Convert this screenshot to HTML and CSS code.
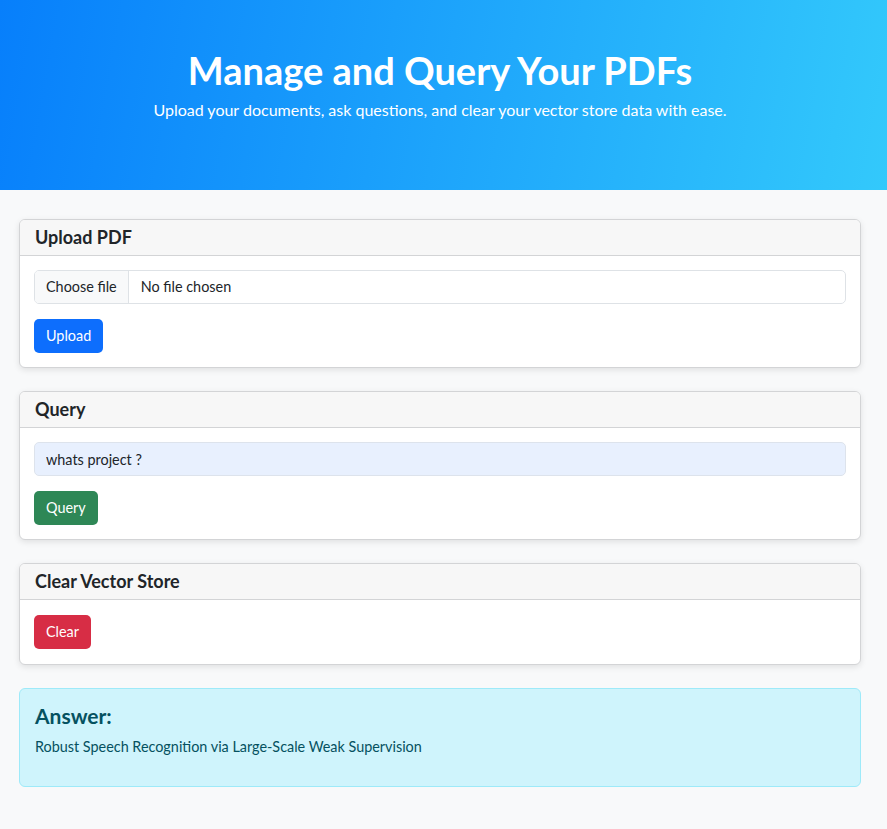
FILE: index.html
```html
<!DOCTYPE html>
<html lang="en">
<head>
<meta charset="utf-8">
<title>Manage and Query Your PDFs</title>
<link rel="stylesheet" href="styles.css">
</head>
<body>
<header class="hero">
  <h1 class="hero-title">Manage and Query Your PDFs</h1>
  <p class="hero-sub">Upload your documents, ask questions, and clear your vector store data with ease.</p>
</header>
<main class="main">
  <section class="card">
    <div class="card-header"><h5 class="card-title">Upload PDF</h5></div>
    <div class="card-body">
      <div class="file-input">
        <span class="file-btn">Choose file</span>
        <span class="file-name">No file chosen</span>
      </div>
      <button class="btn btn-primary">Upload</button>
    </div>
  </section>
  <section class="card">
    <div class="card-header"><h5 class="card-title">Query</h5></div>
    <div class="card-body">
      <input class="text-input" type="text" value="whats project ?">
      <button class="btn btn-success">Query</button>
    </div>
  </section>
  <section class="card">
    <div class="card-header"><h5 class="card-title">Clear Vector Store</h5></div>
    <div class="card-body card-body-tall">
      <button class="btn btn-danger">Clear</button>
    </div>
  </section>
  <section class="alert">
    <h4 class="alert-title">Answer:</h4>
    <p class="alert-text">Robust Speech Recognition via Large-Scale Weak Supervision</p>
  </section>
</main>
</body>
</html>
```
FILE: styles.css
```css
* { box-sizing: border-box; }
html, body { margin: 0; padding: 0; }
body {
  background: #f8f9fa;
  font-family: Lato, "Noto Sans", sans-serif;
  font-size: 14.4px;
  line-height: 1.5;
  color: #212529;
}
.hero {
  height: 190px;
  background: linear-gradient(100deg, #077ffb 0%, #33c9fb 100%);
  color: #fff;
  text-align: center;
  padding: 48px 7px 0 0;
}
.hero-title {
  margin: 0;
  font-size: 38px;
  font-weight: 700;
  line-height: 45px;
}
.hero-sub {
  margin: 5px 0 0;
  font-size: 16px;
  line-height: 24px;
}
.main {
  padding: 29px 26px 30px 19px;
}
.card {
  background: #fff;
  border: 1px solid #d3d4d6;
  border-radius: 6px;
  box-shadow: 0 2px 6px rgba(0,0,0,0.10);
  margin-bottom: 23px;
  overflow: hidden;
}
.card-header {
  background: #f7f7f7;
  border-bottom: 1px solid #d3d4d6;
  padding: 7px 15px;
}
.card-title {
  margin: 0;
  font-size: 18px;
  font-weight: 700;
  line-height: 21px;
  color: #212529;
}
.card-body {
  padding: 14px 14px;
  display: flex;
  flex-direction: column;
  align-items: flex-start;
  gap: 15px;
}
.card-body-tall {
  padding: 15px 14px 15px;
}
.file-input {
  align-self: stretch;
  display: flex;
  height: 34px;
  border: 1px solid #dee2e6;
  border-radius: 5px;
  overflow: hidden;
  font-size: 14.4px;
  line-height: 32px;
}
.file-btn {
  background: #f8f9fa;
  border-right: 1px solid #dee2e6;
  padding: 0 11px;
}
.file-name {
  padding: 0 12px;
}
.text-input {
  align-self: stretch;
  height: 34px;
  border: 1px solid #dde3ec;
  border-radius: 5px;
  background: #e8f0fe;
  padding: 0 11px;
  font: inherit;
  color: #212529;
}
.btn {
  height: 34px;
  border: 1px solid transparent;
  border-radius: 5px;
  padding: 0 11px;
  font: inherit;
  color: #fff;
}
.btn-primary { background: #0d6efd; }
.btn-success { background: #2e8756; }
.btn-danger { background: #d72d45; }
.alert {
  background: #cff4fc;
  border: 1px solid #9eeaf9;
  border-radius: 6px;
  color: #055160;
  padding: 14px 15px;
}
.alert-title {
  margin: 0 0 8px;
  font-size: 21px;
  font-weight: 700;
  line-height: 25px;
}
.alert-text {
  margin: 0 0 14px;
  line-height: 21.6px;
}
```
